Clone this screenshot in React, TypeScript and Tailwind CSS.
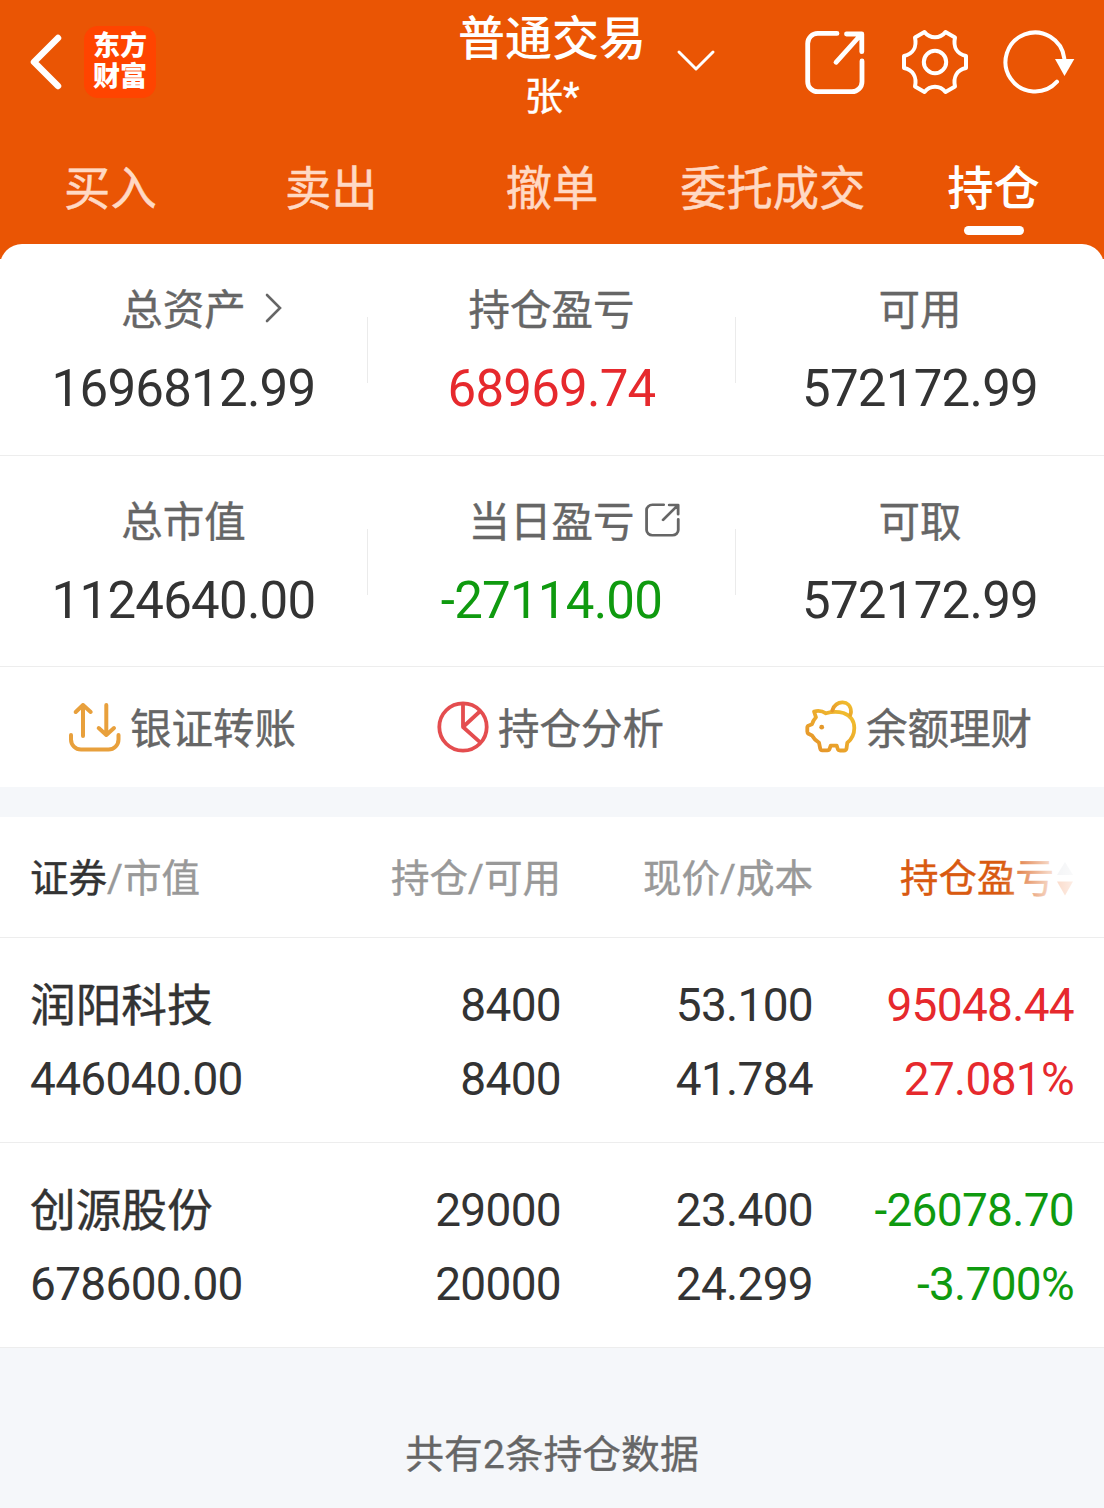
import type { ReactNode } from "react";
import clsx from "clsx";

type Tone = "up" | "down" | "normal";

const toneClass: Record<Tone, string> = {
  up: "text-[#e6292d]",
  down: "text-[#0f9a0f]",
  normal: "text-[#333333]",
};

const tabs = ["买入", "卖出", "撤单", "委托成交", "持仓"];

const holdings: { name: string; marketValue: string; amount: string; available: string; price: string; cost: string; profit: string; rate: string; tone: Tone }[] = [
  {
    name: "润阳科技",
    marketValue: "446040.00",
    amount: "8400",
    available: "8400",
    price: "53.100",
    cost: "41.784",
    profit: "95048.44",
    rate: "27.081%",
    tone: "up",
  },
  {
    name: "创源股份",
    marketValue: "678600.00",
    amount: "29000",
    available: "20000",
    price: "23.400",
    cost: "24.299",
    profit: "-26078.70",
    rate: "-3.700%",
    tone: "down",
  },
];

function ShareIcon({ className }: { className?: string }) {
  return (
    <svg className={className} viewBox="0 0 60 65" preserveAspectRatio="none" fill="none" stroke="currentColor" strokeWidth={4.8} strokeLinecap="round" strokeLinejoin="round">
      <path d="M32 3.4H12.7a10 10 0 0 0-10 10v38.3a10 10 0 0 0 10 10H47a10 10 0 0 0 10-10V31" />
      <path d="M31 32.3 56.5 4M41.5 4h15.3v17.7" />
    </svg>
  );
}

function GearIcon() {
  return (
    <svg className="h-[68px] w-[68px]" viewBox="-34 -34 68 68" fill="none" stroke="currentColor" strokeWidth={4} strokeLinejoin="round">
      <path d="M-10.5-30C-5-23 5-23 10.5-30L20-24.5C18-15 22-8 31-6V6C22 8 18 15 20 24.5L10.5 30C5 23-5 23-10.5 30L-20 24.5C-18 15-22 8-31 6V-6C-22-8-18-15-20-24.5Z" />
      <circle r="11.2" />
    </svg>
  );
}

function RefreshIcon() {
  return (
    <svg className="h-16 w-[72px]" viewBox="-32 -32 72 64" fill="none" stroke="currentColor" strokeWidth={4} strokeLinecap="round">
      <path d="M22 19.7A29.5 29.5 0 1 1 29.3-3.5" />
      <path d="M20-3H39.3L29.5 14Z" fill="currentColor" stroke="none" />
    </svg>
  );
}

function TransferIcon() {
  return (
    <svg className="h-[52px] w-[54px]" viewBox="0 0 54 52" fill="none" stroke="#e8a03c" strokeWidth={4} strokeLinecap="round" strokeLinejoin="round">
      <path d="M15 35V4M7.7 11 15 4l7.7 7M38.3 4v30M30.7 27l7.6 7 7.7-7" />
      <path d="M3 34v4.5a10 10 0 0 0 10 10h27.5a10 10 0 0 0 10-10V34" />
    </svg>
  );
}

function PieIcon() {
  return (
    <svg className="h-[52px] w-[54px]" viewBox="-27 -26 54 52" fill="none" stroke="#e44d4f" strokeWidth={3.8} strokeLinejoin="round">
      <circle r="23.7" />
      <path d="M0-23.7V0L16.8-15.5M0 0 17.5 15.7" />
    </svg>
  );
}

function PiggyIcon() {
  return (
    <svg className="h-[54px] w-[54px]" viewBox="0 0 54 54" fill="none" stroke="url(#piggy)" strokeWidth={3.8} strokeLinecap="round" strokeLinejoin="round">
      <defs>
        <linearGradient id="piggy" x1="1" y1="0" x2="0" y2="1">
          <stop offset="0" stopColor="#f2c12e" />
          <stop offset="1" stopColor="#e4902a" />
        </linearGradient>
      </defs>
      <path d="M10 11.5C14 10.5 18.5 11 22 13.3C28 11.5 34 11.5 39.5 13C46 15.5 50.3 21 50.3 28C50.3 34 48 39 43.3 42.7L42.5 48.5Q42 50.5 40 50.5H36Q34 50.5 33.6 48.5L32.7 45.7H26.7L25.7 48.5Q25.2 50.3 23.3 50.3H18.3Q16.5 50.3 16.2 48.5L15 42.7C12 41 9.7 38.5 8 35.5L4.5 33.8Q3.3 33 3.3 31.5V27.5Q3.3 26 4.8 25.5L8 24.3C8.8 21.5 10 19.4 12 17.3Z" />
      <path d="M28.3 10.5C31-.5 47-.5 47 12Q47 13 46.3 14.8" />
      <circle cx="17.7" cy="27.2" r="2.4" fill="#e4982a" stroke="none" />
    </svg>
  );
}

function Stat({ label, value, tone = "normal", icon }: { label: string; value: string; tone?: Tone; icon?: ReactNode }) {
  return (
    <div className="flex w-[367px] flex-col items-center pt-[37px] last:w-[368px]">
      <div className="flex items-center text-[41.5px] leading-[60px] text-[#666666] [-webkit-text-stroke:0.4px]">
        <span>{label}</span>
        {/* zero width keeps the label centred over the number */}
        <span className="flex w-0 items-center pb-1.5">{icon}</span>
      </div>
      <div className={clsx("mt-[18px] text-[51px] leading-[60px] tracking-[-0.015em]", toneClass[tone])}>{value}</div>
    </div>
  );
}

function Divider() {
  return <div className="mt-[73px] h-[66px] w-px bg-[#ebebeb]" />;
}

function Action({ icon, label }: { icon: ReactNode; label: string }) {
  return (
    <div className="flex flex-1 items-center justify-center gap-2 pr-1">
      {icon}
      <span className="pt-[5px] text-[41.5px] leading-[60px] text-[#666666] [-webkit-text-stroke:0.4px]">{label}</span>
    </div>
  );
}

function Header() {
  return (
    <header className="h-[259px] bg-[#ea5504] text-white">
      <div className="grid h-[120px] grid-cols-3 grid-rows-[119px] pt-px">
        <div className="flex items-center pt-[3px] pl-7">
          <svg className="h-14 w-9" viewBox="0 0 36 56" fill="none" stroke="currentColor" strokeWidth={6.5} strokeLinecap="round" strokeLinejoin="round">
            <path d="M30 4 6 28l24 24" />
          </svg>
          <div className="ml-5 flex h-[72px] w-[72px] flex-col items-center justify-center rounded-[14px] bg-[#ff4400] text-[27px] leading-[31px] font-black">
            <span>东方</span>
            <span>财富</span>
          </div>
        </div>
        <div className="flex items-center justify-center">
          <div className="flex flex-col items-center pt-[12px]">
            <div className="text-[47px] leading-[60px] font-medium">普通交易</div>
            <div className="text-[38.5px] leading-[56px] [-webkit-text-stroke:0.4px]">张*</div>
          </div>
          <div className="w-0">
            <svg className="ml-[30px] h-6 w-10" viewBox="0 0 40 24" fill="none" stroke="currentColor" strokeWidth={3} strokeLinecap="round" strokeLinejoin="round">
              <path d="M3 3l17 17L37 3" />
            </svg>
          </div>
        </div>
        <div className="flex items-center justify-end pt-[3px] pr-[29px]">
          <ShareIcon className="h-[65px] w-[60px]" />
          <div className="mr-[34px] ml-9">
            <GearIcon />
          </div>
          <RefreshIcon />
        </div>
      </div>
      <nav className="grid grid-cols-5 pt-[39px]">
        {tabs.map((tab) => {
          const active = tab === "持仓";
          return (
            <div key={tab} className="flex flex-col items-center">
              <span className={clsx("text-[46.3px] leading-[60px] whitespace-nowrap", active ? "font-medium text-white" : "text-[#ffd9c4] [-webkit-text-stroke:0.5px]")}>{tab}</span>
              {active && <div className="mt-[7px] h-[9px] w-[60px] rounded-full bg-white" />}
            </div>
          );
        })}
      </nav>
    </header>
  );
}

function Cell({ top, bottom, tone = "normal", left }: { top: string; bottom: string; tone?: Tone; left?: boolean }) {
  return (
    <div className={clsx("flex flex-col text-[46px] leading-[74px]", left ? "items-start" : "items-end", toneClass[tone])}>
      {left ? <span className="-mb-0.5 pt-0.5 text-[45.7px] [-webkit-text-stroke:0.4px]">{top}</span> : <span className="tracking-[-0.015em]">{top}</span>}
      <span className="tracking-[-0.015em]">{bottom}</span>
    </div>
  );
}

export default function App() {
  return (
    <div className="min-h-[1508px] w-[1104px] bg-[#f5f7fa] font-[Roboto,'Noto_Sans_CJK_SC',sans-serif]" lang="zh-CN">
      <div className="bg-white">
        <Header />
        <section className="relative -mt-[15px] rounded-t-[22px] bg-white">
          <div className="flex h-[212px] border-b border-[#ededed]">
            <Stat
              label="总资产"
              value="1696812.99"
              icon={
                <svg className="ml-[18px] h-8 w-[18px] shrink-0" viewBox="0 0 18 32" fill="none" stroke="currentColor" strokeWidth={2.6} strokeLinecap="round">
                  <path d="M3 3l13 13L3 29" />
                </svg>
              }
            />
            <Divider />
            <Stat label="持仓盈亏" value="68969.74" tone="up" />
            <Divider />
            <Stat label="可用" value="572172.99" />
          </div>
          <div className="flex h-[211px] border-b border-[#ededed]">
            <Stat label="总市值" value="1124640.00" />
            <Divider />
            <Stat label="当日盈亏" value="-27114.00" tone="down" icon={<ShareIcon className="ml-2.5 h-[34px] w-[35px] shrink-0" />} />
            <Divider />
            <Stat label="可取" value="572172.99" />
          </div>
          <div className="flex h-[120px]">
            <Action icon={<TransferIcon />} label="银证转账" />
            <Action icon={<PieIcon />} label="持仓分析" />
            <Action icon={<PiggyIcon />} label="余额理财" />
          </div>
        </section>
      </div>

      <section className="mt-[30px] bg-white">
        <div className="grid h-[121px] grid-cols-[278px_253px_252px_261px] items-center border-b border-[#ededed] px-[30px] pt-1 text-[38.5px] leading-[60px] text-[#999999] [-webkit-text-stroke:0.4px]">
          <div>
            <span className="text-[#333333]">证券</span>/市值
          </div>
          <div className="text-right">持仓/可用</div>
          <div className="text-right">现价/成本</div>
          <div className="relative flex items-center justify-end text-[#d95a10]">
            <span>持仓盈亏</span>
            <svg className="ml-[2px] h-9 w-[18px]" viewBox="0 0 18 36">
              <path d="M1 14 9 1l8 13z" fill="#c8ccd4" />
              <path d="M1 20.5 9 34.5l8-14z" fill="#ea5504" />
            </svg>
            <div className="absolute inset-y-0 right-0 w-[72px] bg-linear-to-r from-white/0 via-white/75 via-65% to-white/90" />
          </div>
        </div>
        {holdings.map((h) => (
          <div key={h.name} className="grid h-[205px] grid-cols-[278px_253px_252px_261px] border-b border-[#ededed] px-[30px] pt-[30px]">
            <Cell left top={h.name} bottom={h.marketValue} />
            <Cell top={h.amount} bottom={h.available} />
            <Cell top={h.price} bottom={h.cost} />
            <Cell top={h.profit} bottom={h.rate} tone={h.tone} />
          </div>
        ))}
      </section>

      <footer className="pt-[77px] text-center text-[38.8px] leading-[60px] text-[#666666] [-webkit-text-stroke:0.3px]">共有2条持仓数据</footer>
    </div>
  );
}
